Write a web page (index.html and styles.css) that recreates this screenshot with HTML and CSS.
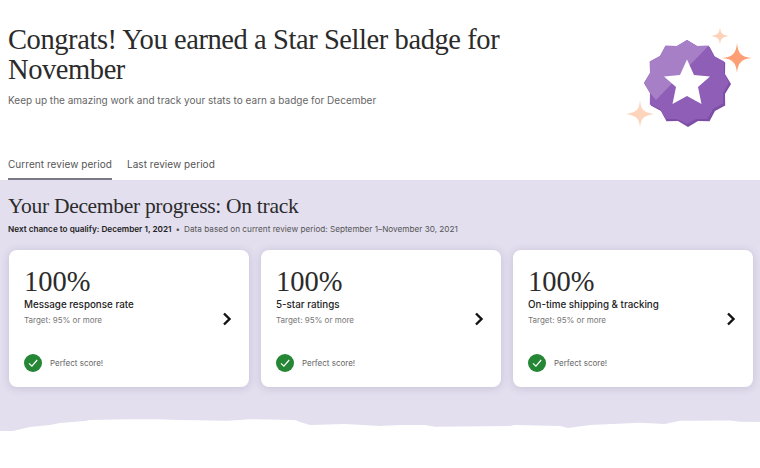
FILE: index.html
```html
<!DOCTYPE html>
<html lang="en">
<head>
<meta charset="utf-8">
<title>Star Seller</title>
<link rel="stylesheet" href="styles.css">
</head>
<body>
<header class="hero">
  <div class="hero-text">
    <h1 class="title">Congrats! You earned a Star Seller badge for November</h1>
    <p class="subtitle">Keep up the amazing work and track your stats to earn a badge for December</p>
  </div>
  <svg class="badge" width="140" height="110" viewBox="0 0 140 110" aria-hidden="true">
    <g transform="translate(70,60)">
      <polygon fill="#7d4ea6" transform="translate(1,1)" points="0,-43 10,-37 21.5,-37.2 27,-27 37.2,-21.5 37,-10 43,0 37,10 37.2,21.5 27,27 21.5,37.2 10,37 0,43 -10,37 -21.5,37.2 -27,27 -37.2,21.5 -37,10 -43,0 -37,-10 -37.2,-21.5 -27,-27 -21.5,-37.2 -10,-37"/>
      <polygon fill="#8f5eb6" points="0,-43 10,-37 21.5,-37.2 27,-27 37.2,-21.5 37,-10 42,0 36,10 36.2,20.5 26,26 20.5,36 9,36 0,41 -10,36 -21.5,36 -27,26 -37.2,21.5 -37,10 -43,0 -37,-10 -37.2,-21.5 -27,-27 -21.5,-37.2 -10,-37"/>
      <polygon fill="#a77fc6" points="0,-43 10,-37 21.5,-37.2 -31,17 -37,10 -43,0 -37,-10 -37.2,-21.5 -27,-27 -21.5,-37.2 -10,-37"/>
      <polygon fill="#fff" points="0,-23.5 7,-8 23,-6.5 11,4 14.5,21 0,13 -14.5,21 -11,4 -23,-6.5 -7,-8"/>
    </g>
    <g transform="translate(7,2)">
      <path fill="#fd9f75" d="M113,18 C114,28 117,32 128,33 C117,34 114,38 113,48 C112,38 109,34 98,33 C109,32 112,28 113,18Z"/>
      <path fill="#fcd3b8" d="M96,2 C96.5,8 98,10 105,11 C98,12 96.5,14 96,20 C95.5,14 94,12 87,11 C94,10 95.5,8 96,2Z"/>
      <path fill="#fdd5bd" d="M16,75 C17,85 19,87 30,89 C19,91 17,93 16,103 C15,93 13,91 2,89 C13,87 15,85 16,75Z"/>
    </g>
  </svg>
</header>
<nav class="tabs">
  <a class="tab tab-active">Current review period</a>
  <a class="tab">Last review period</a>
</nav>
<main class="progress">
  <h2 class="progress-title">Your December progress: On track</h2>
  <p class="progress-meta"><strong class="meta-strong">Next chance to qualify: December 1, 2021</strong><span class="meta-dot">•</span>Data based on current review period: September 1–November 30, 2021</p>
  <section class="cards">
    <article class="card">
      <div class="card-value">100%</div>
      <div class="card-label">Message response rate</div>
      <div class="card-target">Target: 95% or more</div>
      <div class="card-status">
        <svg class="check" width="18" height="18" viewBox="0 0 18 18" aria-hidden="true"><circle cx="9" cy="9" r="9" fill="#258635"/><path d="M5 9.4 L7.9 12.2 L13.2 6" fill="none" stroke="#fff" stroke-width="1.2"/></svg>
        <span>Perfect score!</span>
      </div>
      <svg class="chev" width="10" height="14" viewBox="0 0 10 14" aria-hidden="true"><path d="M2 1.5 L7.5 7 L2 12.5" fill="none" stroke="#111" stroke-width="2.4"/></svg>
    </article>
    <article class="card">
      <div class="card-value">100%</div>
      <div class="card-label">5-star ratings</div>
      <div class="card-target">Target: 95% or more</div>
      <div class="card-status">
        <svg class="check" width="18" height="18" viewBox="0 0 18 18" aria-hidden="true"><circle cx="9" cy="9" r="9" fill="#258635"/><path d="M5 9.4 L7.9 12.2 L13.2 6" fill="none" stroke="#fff" stroke-width="1.2"/></svg>
        <span>Perfect score!</span>
      </div>
      <svg class="chev" width="10" height="14" viewBox="0 0 10 14" aria-hidden="true"><path d="M2 1.5 L7.5 7 L2 12.5" fill="none" stroke="#111" stroke-width="2.4"/></svg>
    </article>
    <article class="card">
      <div class="card-value">100%</div>
      <div class="card-label">On-time shipping &amp; tracking</div>
      <div class="card-target">Target: 95% or more</div>
      <div class="card-status">
        <svg class="check" width="18" height="18" viewBox="0 0 18 18" aria-hidden="true"><circle cx="9" cy="9" r="9" fill="#258635"/><path d="M5 9.4 L7.9 12.2 L13.2 6" fill="none" stroke="#fff" stroke-width="1.2"/></svg>
        <span>Perfect score!</span>
      </div>
      <svg class="chev" width="10" height="14" viewBox="0 0 10 14" aria-hidden="true"><path d="M2 1.5 L7.5 7 L2 12.5" fill="none" stroke="#111" stroke-width="2.4"/></svg>
    </article>
  </section>
</main>
<svg class="torn" width="760" height="13" viewBox="0 0 760 13" aria-hidden="true">
  <path fill="#e3dfef" d="M0,0 H760 V3 L740,2.7 730,1.5 680,1.7 665,5 640,3.7 590,6 568,9 560,7 515,6 510,7 435,7.7 425,6 400,6 380,7 345,5 310,6 300,3 295,1 250,0.2 228,1.7 180,1 155,0.2 130,0.2 90,1 85,2 60,4 50,6 30,8 13,12 0,12 Z"/>
</svg>
</body>
</html>
```

FILE: styles.css
```css
* { box-sizing: border-box; }
html, body { margin: 0; padding: 0; background: #fff; }
body { width: 760px; height: 468px; overflow: hidden; font-family: Inter, "Liberation Sans", sans-serif; color: #222; }

.hero { display: flex; justify-content: space-between; height: 148px; padding: 25px 0 0 8px; }
.hero-text { width: 500px; }
.title { margin: 0; font: 400 28.5px/30px "Liberation Serif", serif; letter-spacing: -0.42px; color: #2b2b2b; }
.subtitle { margin: 8px 0 0; font-size: 10px; line-height: 14px; letter-spacing: 0.01px; color: #666; }
.badge { flex: none; margin: -2px 3px 0 0; }

.tabs { display: flex; gap: 15px; height: 32px; padding-left: 8px; }
.tab { height: 32px; padding-top: 9px; font-size: 10px; line-height: 14px; letter-spacing: 0.05px; color: #555; }
.tab-active { border-bottom: 2px solid #7b7985; }

.progress { height: 239px; padding: 14px 7px 0 9px; background: #e3dfef; }
.progress-title { margin: -1px 0 1px -1px; font: 400 21.5px/26px "Liberation Serif", serif; letter-spacing: -0.3px; color: #2b2b2b; }
.progress-meta { margin: 4px 0 0 -1px; font-size: 8.2px; line-height: 12px; color: #555; white-space: nowrap; }
.meta-strong { font-weight: 600; color: #222; }
.meta-dot { margin: 0 4px; }

.cards { display: grid; grid-template-columns: repeat(3, 240px); gap: 12px; margin-top: 15px; }
.card { position: relative; display: flex; flex-direction: column; height: 137px; padding: 15px 15px 0; background: #fff; border-radius: 8px; box-shadow: 0 1px 8px rgba(60, 50, 90, 0.18); }
.card-value { font: 400 28.5px/33px "Liberation Serif", serif; color: #2b2b2b; }
.card-label { margin-top: 0; font-size: 9.8px; line-height: 14px; font-weight: 500; color: #222; }
.card-target { margin-top: 2px; font-size: 8px; line-height: 12px; color: #777; }
.card-status { display: flex; align-items: center; gap: 8px; margin-top: auto; margin-bottom: 15px; font-size: 8px; color: #666; }
.chev { position: absolute; top: 62px; right: 17px; }

.torn { display: block; }
```
